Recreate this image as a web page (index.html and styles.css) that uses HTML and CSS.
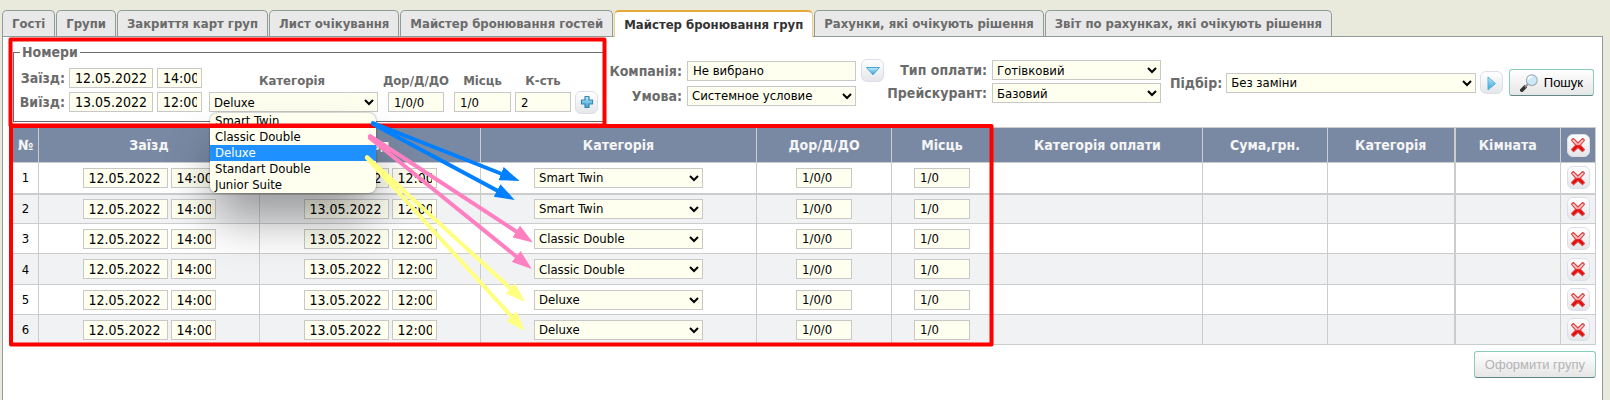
FILE: index.html
```html
<!DOCTYPE html>
<html lang="uk">
<head>
    <meta charset="UTF-8">
    <meta name="viewport" content="width=device-width, initial-scale=1.0">
    <title>Майстер бронювання груп</title>
    <link rel="stylesheet" href="styles.css">
</head>
<body>
    <!-- Icons -->
    <svg class="defs" aria-hidden="true">
        <defs>
            <linearGradient id="g-blue" x1="0" y1="0" x2="0" y2="1">
                <stop offset="0" stop-color="#c3ecfa"/>
                <stop offset="1" stop-color="#2f9ed6"/>
            </linearGradient>
            <linearGradient id="g-red" x1="0" y1="0" x2="0" y2="1">
                <stop offset="0.1" stop-color="#ffeaea"/>
                <stop offset="0.45" stop-color="#f5b5b5"/>
                <stop offset="0.55" stop-color="#ea1212"/>
                <stop offset="1" stop-color="#e00000"/>
            </linearGradient>
            <symbol id="i-cross" viewBox="0 0 16 16">
                <path d="M3.300 1.500L8 6L12.700 1.500L14.500 3.200L10.400 8.100L14.500 12.600L12.400 14.600L8 10.600L3.600 14.600L1.500 12.600L5.600 8.100L1.500 3.200Z" fill="url(#g-red)" stroke="#dc4040" stroke-width="1.1" stroke-linejoin="round"/>
            </symbol>
            <symbol id="i-plus" viewBox="0 0 16 16">
                <path d="M6 2.5h4v3.500h3.500v4H10v3.500H6V10H2.500V6H6Z" fill="url(#g-blue)" stroke="#3787ae" stroke-width="1.2" stroke-linejoin="round"/>
            </symbol>
            <symbol id="i-down" viewBox="0 0 16 16">
                <path d="M1.5 4.5h13L8 11.8Z" fill="url(#g-blue)" stroke="#4aa5d0" stroke-linejoin="round"/>
            </symbol>
            <symbol id="i-right" viewBox="0 0 16 16">
                <path d="M5 2v13L12.5 8.5Z" fill="url(#g-blue)" stroke="#55b2dc" stroke-linejoin="round"/>
            </symbol>
            <symbol id="i-search" viewBox="0 0 18 18">
                <path d="M1.8 16.2 L5.2 12.8" stroke="#333" stroke-width="3.6" stroke-linecap="round"/>
                <path d="M5 13 L8 10" stroke="#999" stroke-width="2"/>
                <circle cx="11.8" cy="6.2" r="5.4" fill="#cbe9f8" stroke="#a3b2ba" stroke-width="1.2"/>
                <path d="M8.3 5.5a3.6 3.6 0 0 1 4-2.8" fill="none" stroke="#fff" stroke-width="1.6"/>
            </symbol>
        </defs>
    </svg>

    <nav class="tabs">
        <a href="#">Гості</a>
        <a href="#">Групи</a>
        <a href="#">Закриття карт груп</a>
        <a href="#">Лист очікування</a>
        <a href="#">Майстер бронювання гостей</a>
        <a href="#" class="active">Майстер бронювання груп</a>
        <a href="#">Рахунки, які очікують рішення</a>
        <a href="#">Звіт по рахунках, які очікують рішення</a>
    </nav>

    <main class="panel">
        <form class="toolbar">
            <fieldset class="rooms">
                <legend>Номери</legend>
                <div class="rooms-grid">
                    <label class="lbl" for="d-in">Заїзд:</label>
                    <input type="text" id="d-in" class="date" value="12.05.2022">
                    <input type="text" class="time" aria-label="Час заїзду" value="14:00">
                    <label class="head" for="cat">Категорія</label>
                    <label class="head" for="beds">Дор/Д/ДО</label>
                    <label class="head" for="places">Місць</label>
                    <label class="head" for="count">К-сть</label>
                    <span></span>

                    <label class="lbl" for="d-out">Виїзд:</label>
                    <input type="text" id="d-out" class="date" value="13.05.2022">
                    <input type="text" class="time" aria-label="Час виїзду" value="12:00">
                    <div class="dropdown">
                        <select id="cat"><option>Deluxe</option></select>
                        <ul class="menu">
                            <li>Smart Twin</li>
                            <li>Classic Double</li>
                            <li class="selected">Deluxe</li>
                            <li>Standart Double</li>
                            <li>Junior Suite</li>
                        </ul>
                    </div>
                    <input type="text" id="beds" class="short" value="1/0/0">
                    <input type="text" id="places" value="1/0">
                    <input type="text" id="count" value="2">
                    <button type="button" class="icon-btn" aria-label="Додати"><svg><use href="#i-plus"/></svg></button>
                </div>
            </fieldset>

            <div class="group company">
                <label class="lbl" for="company">Компанія:</label>
                <input type="text" id="company" value="Не вибрано">
                <button type="button" class="icon-btn" aria-label="Вибрати компанію"><svg><use href="#i-down"/></svg></button>
                <label class="lbl" for="cond">Умова:</label>
                <select id="cond"><option>Системное условие</option></select>
            </div>

            <div class="group payment">
                <label class="lbl" for="pay">Тип оплати:</label>
                <select id="pay"><option>Готівковий</option></select>
                <label class="lbl" for="price">Прейскурант:</label>
                <select id="price"><option>Базовий</option></select>
            </div>

            <div class="picker">
                <label class="lbl" for="pick">Підбір:</label>
                <select id="pick"><option>Без заміни</option></select>
                <button type="button" class="icon-btn" aria-label="Далі"><svg><use href="#i-right"/></svg></button>
                <button type="button" class="btn search"><svg><use href="#i-search"/></svg>Пошук</button>
            </div>
        </form>

        <table class="list">
            <colgroup>
                <col class="c-num"><col class="c-date"><col class="c-date"><col class="c-cat"><col class="c-beds"><col class="c-places">
                <col class="c-pay"><col class="c-sum"><col class="c-kind"><col class="c-room"><col class="c-del">
            </colgroup>
            <thead>
                <tr>
                    <th>№</th>
                    <th>Заїзд</th>
                    <th>Виїзд</th>
                    <th>Категорія</th>
                    <th>Дор/Д/ДО</th>
                    <th>Місць</th>
                    <th>Категорія оплати</th>
                    <th>Сума,грн.</th>
                    <th class="thick">Категорія</th>
                    <th>Кімната</th>
                    <th><button type="button" class="icon-btn" aria-label="Видалити всі"><svg><use href="#i-cross"/></svg></button></th>
                </tr>
            </thead>
            <tbody id="rows"></tbody>
        </table>

        <div class="footer">
            <button type="button" class="btn" disabled>Оформити групу</button>
        </div>
    </main>

    <!-- Notes drawn over the form -->
    <svg class="notes" aria-hidden="true">
        <defs>
            <marker id="m-blue" markerUnits="userSpaceOnUse" markerWidth="20" markerHeight="14" refX="1" refY="7" orient="auto"><path d="M0 0L20 7L0 14Z" fill="#0080ff"/></marker>
            <marker id="m-pink" markerUnits="userSpaceOnUse" markerWidth="20" markerHeight="14" refX="1" refY="7" orient="auto"><path d="M0 0L20 7L0 14Z" fill="#ff80c0"/></marker>
            <marker id="m-yellow" markerUnits="userSpaceOnUse" markerWidth="20" markerHeight="14" refX="1" refY="7" orient="auto"><path d="M0 0L20 7L0 14Z" fill="#ffff80"/></marker>
        </defs>
        <g class="frame">
            <rect x="10.5" y="39.5" width="594" height="86"/>
            <rect x="11" y="126" width="980.5" height="218.5"/>
        </g>
        <g class="arrow blue">
            <path d="M373 123L502 174"/>
            <path d="M373 124L498 191"/>
        </g>
        <g class="arrow pink">
            <path d="M370 136L517 232"/>
            <path d="M370 138L517 257"/>
        </g>
        <g class="arrow yellow">
            <path d="M367 157L511 289"/>
            <path d="M367 158L512 317"/>
        </g>
    </svg>

    <script>
        const kinds = ['Smart Twin', 'Smart Twin', 'Classic Double', 'Classic Double', 'Deluxe', 'Deluxe'];
        const rows = document.getElementById('rows');

        kinds.forEach((kind, i) => {
            const tr = document.createElement('tr');
            tr.innerHTML = `
                <td>${i + 1}</td>
                <td><div class="pair"><input type="text" aria-label="Дата заїзду" class="date" value="12.05.2022"><input type="text" aria-label="Час заїзду" class="time" value="14:00"></div></td>
                <td><div class="pair"><input type="text" aria-label="Дата виїзду" class="date" value="13.05.2022"><input type="text" aria-label="Час виїзду" class="time" value="12:00"></div></td>
                <td><select aria-label="Категорія"><option>${kind}</option></select></td>
                <td><input type="text" aria-label="Дор/Д/ДО" class="short" value="1/0/0"></td>
                <td><input type="text" aria-label="Місць" class="short" value="1/0"></td>
                <td></td><td></td><td class="thick"></td><td></td>
                <td><button type="button" class="icon-btn" aria-label="Видалити"><svg><use href="#i-cross"/></svg></button></td>`;
            rows.appendChild(tr);
        });
    </script>
</body>
</html>
```
FILE: styles.css
```css
* {
    box-sizing: border-box;
}
body {
    margin: 0;
    padding: 10px 7px 0 2px;
    min-height: 100vh;
    display: flex;
    flex-direction: column;
    position: relative;
    background: #e9e9dc;
    font-family: "DejaVu Sans Condensed", Tahoma, "DejaVu Sans", sans-serif;
    font-size: 13px;
    color: #000;
}
.defs {
    position: absolute;
    width: 0;
    height: 0;
}

/* Tabs */
.tabs {
    display: flex;
    gap: 1px;
}
.tabs a {
    height: 26px;
    padding: 0 9px;
    border: 1px solid #8f9c9c;
    border-bottom: none;
    border-radius: 5px 5px 0 0;
    background: #e9e9e9;
    color: #6b6b6b;
    font-weight: bold;
    line-height: 26px;
    text-decoration: none;
    white-space: nowrap;
}
.tabs .active {
    height: 27px;
    margin-bottom: -1px;
    position: relative;
    background: #fff;
    border-color: #e8a93c #f2cf80 #fff;
    border-top-width: 2px;
    line-height: 25px;
    color: #333;
}
.panel {
    flex: 1;
    padding: 7px 6px 0 9px;
    border: 1px solid #8f9c9c;
    border-bottom: none;
    background: #fff;
}

/* Controls */
input,
select {
    width: 100%;
    height: 20px;
    margin: 0;
    border: 1px solid #c8c8c8;
    border-radius: 0;
    background: #fffff0;
    color: #000;
    font: inherit;
}
input {
    padding: 0 4px 0 5px;
}
select {
    padding: 0;
}
.date,
.time {
    font-size: 14px;
}
.icon-btn {
    display: flex;
    align-items: center;
    justify-content: center;
    width: 23px;
    height: 23px;
    padding: 0;
    border: 1px solid #dcdfe9;
    border-radius: 6px;
    background: linear-gradient(#fff, #e4e6ea);
}
.icon-btn svg {
    width: 16px;
    height: 16px;
}
.btn {
    display: flex;
    align-items: center;
    justify-content: center;
    gap: 6px;
    height: 27px;
    padding: 0 10px;
    border: 1px solid #8accbc;
    border-bottom-color: #5f8585;
    border-radius: 3px;
    background: linear-gradient(#fff, #e6e6e6);
    color: #000;
    font-family: "Liberation Sans", Arial, sans-serif;
    font-size: 13px;
    white-space: nowrap;
}
.btn:disabled {
    color: #b4b4b4;
}
.btn svg {
    width: 18px;
    height: 18px;
}
.lbl {
    color: #6b6b6b;
    font-size: 14px;
    font-weight: bold;
    text-align: right;
    white-space: nowrap;
}
.short {
    width: 56px;
}

/* Toolbar */
.toolbar {
    display: flex;
    align-items: flex-start;
    padding: 0 2px 5px 1px;
}
.rooms {
    flex: none;
    margin: 0;
    padding: 8px 5px 7px 6px;
    border: 1px solid #6b6b6b;
}
.rooms legend {
    padding: 0 2px;
    color: #6b6b6b;
    font-size: 14px;
    font-weight: bold;
    line-height: 16px;
}
.rooms-grid {
    display: grid;
    grid-template-columns: 45px 84px 45px 172px 68px 57px 56px 23px;
    grid-template-rows: 20px 24px;
    gap: 2px 4px;
    align-items: center;
    justify-items: center;
}
.rooms-grid .lbl {
    justify-self: end;
}
.head {
    color: #6b6b6b;
    font-weight: bold;
    align-self: end;
}
.dropdown {
    position: relative;
    justify-self: end;
    width: 169px;
}
.dropdown select {
    display: block;
}
.menu {
    position: absolute;
    z-index: 2;
    top: 21px;
    left: 1px;
    width: 166px;
    margin: 0;
    padding: 0;
    overflow: hidden;
    border-radius: 7px;
    background: #fffff0;
    box-shadow: 0 30px 50px -6px rgba(0, 0, 0, 0.4), 0 0 2px rgba(0, 0, 0, 0.5);
    list-style: none;
    line-height: 16px;
}
.menu li {
    padding: 0 5px;
}
.menu .selected {
    background: #1e90ff;
    color: #fff;
}
.group {
    flex: none;
    display: grid;
    align-items: center;
    justify-items: end;
    column-gap: 5px;
}
.company {
    grid-template-columns: 75px 169px 23px;
    grid-template-rows: 23px 23px;
    row-gap: 2px;
    margin-top: 15px;
    padding-left: 3px;
}
.payment {
    grid-template-columns: 99px 169px;
    grid-template-rows: 20px 20px;
    row-gap: 3px;
    margin-top: 16px;
    padding-left: 4px;
}
.picker {
    flex: 1;
    display: flex;
    align-items: center;
    gap: 4px;
    margin-top: 25px;
    padding-left: 9px;
}
.picker select {
    flex: 1;
    min-width: 0;
}
.picker .icon-btn {
    flex: none;
}
.search {
    margin-left: 2px;
}

/* Table */
.list {
    width: 100%;
    table-layout: fixed;
    border-collapse: collapse;
}
.list th,
.list td {
    padding: 0;
    border: 1px solid #ccc;
    text-align: center;
}
.list th {
    height: 35px;
    background: #7989a3;
    color: #f5f5f5;
    font-size: 14px;
}
.list td {
    height: 30px;
}
.list tbody tr:nth-child(3n+1) td {
    height: 31px;
}
.list tbody tr:nth-child(even) {
    background: #f1f2f4;
}
.list tbody tr:first-child td {
    border-bottom-width: 2px;
}
.list .thick {
    border-right-width: 2px;
}
.list select {
    width: 169px;
}
.list .icon-btn {
    margin: 0 auto;
}
.pair {
    display: flex;
    justify-content: center;
    gap: 3px;
}
.pair .date {
    width: 85px;
}
.pair .time {
    width: 45px;
}
.c-num { width: 26px; }
.c-date { width: 221px; }
.c-cat { width: 276px; }
.c-beds { width: 135px; }
.c-places { width: 101px; }
.c-pay { width: 210px; }
.c-sum { width: 125px; }
.c-kind { width: 127px; }
.c-room { width: 106px; }
.c-del { width: 35px; }

.footer {
    display: flex;
    justify-content: flex-end;
    padding-top: 6px;
}

/* Notes layer */
.notes {
    position: absolute;
    z-index: 3;
    top: 0;
    left: 0;
    width: 100%;
    height: 100%;
    pointer-events: none;
}
.frame rect {
    fill: none;
    stroke: #f00;
    stroke-width: 4px;
    stroke-linejoin: round;
}
.arrow path {
    fill: none;
    stroke-width: 4px;
    stroke-linecap: round;
}
.blue path { stroke: #0080ff; marker-end: url(#m-blue); }
.pink path { stroke: #ff80c0; marker-end: url(#m-pink); }
.yellow path { stroke: #ffff80; marker-end: url(#m-yellow); }
```
